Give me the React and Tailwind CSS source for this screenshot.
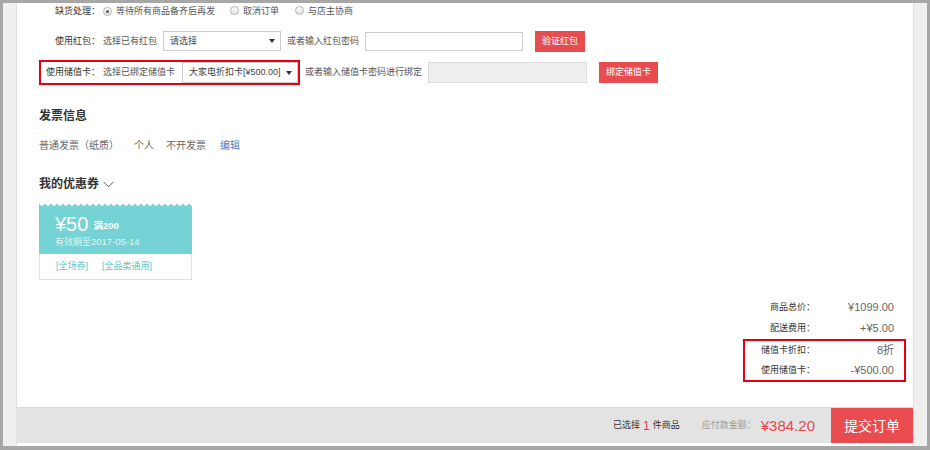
import React from "react";

const font = { fontFamily: '"Liberation Sans", "Noto Sans CJK SC", sans-serif' };

function Radio({ checked }) {
  return (
    <span className="relative inline-flex h-[9px] w-[9px] shrink-0 items-center justify-center rounded-full border border-[#b3b3b3] bg-gradient-to-b from-[#ffffff] to-[#e3e3e3]">
      {checked && <span className="h-[3px] w-[3px] rounded-full bg-[#555555]" />}
    </span>
  );
}

function Arrow() {
  return (
    <svg width="6" height="4" viewBox="0 0 6 4" className="shrink-0">
      <path d="M0 0 L6 0 L3 4 Z" fill="#333333" />
    </svg>
  );
}

export default function App() {
  return (
    <div
      className="h-[450px] w-[930px] overflow-hidden bg-[#a7a7a7] pb-[4px] pl-[3px] pr-[3px] pt-[3px] text-[9px] leading-none text-[#555555]"
      style={font}
    >
      <div className="flex h-full bg-[#efefef]">
        <div className="w-[14px] shrink-0 border-r border-[#e0e0e0]" />
        <div className="flex min-w-0 flex-1 flex-col bg-white">
          <div className="flex flex-1 flex-col pl-[22px]">
            {/* row 1 */}
            <div className="flex h-[16px] items-center">
              <div className="w-[64px] pr-[3px] text-right text-[#333333]">缺货处理：</div>
              <Radio checked />
              <span className="ml-[4px]">等待所有商品备齐后再发</span>
              <span className="ml-[15px]"><Radio /></span>
              <span className="ml-[4px]">取消订单</span>
              <span className="ml-[16px]"><Radio /></span>
              <span className="ml-[4px]">与店主协商</span>
            </div>
            {/* row 2 */}
            <div className="mt-[11px] flex h-[22px] items-center">
              <div className="w-[64px] pr-[3px] text-right text-[#333333]">使用红包：</div>
              <span>选择已有红包</span>
              <div className="ml-[6px] flex h-[20px] w-[118px] items-center justify-between border border-[#cccccc] pl-[6px] pr-[5px] text-[#444444]">
                <span>请选择</span>
                <Arrow />
              </div>
              <span className="ml-[6px]">或者输入红包密码</span>
              <div className="ml-[6px] h-[19px] w-[158px] border border-[#cccccc] bg-white" />
              <div className="ml-[12px] flex h-[21px] w-[50px] items-center justify-center bg-[#e84c4f] text-white">验证红包</div>
            </div>
            {/* row 3 */}
            <div className="mt-[8px] flex h-[25px] items-center">
              <div className="flex h-[25px] w-[261px] items-center border-2 border-[#e60012]">
                <div className="w-[62px] pr-[3px] text-right text-[#333333]">使用储值卡：</div>
                <span>选择已绑定储值卡</span>
                <div className="ml-[7px] flex h-[21px] flex-1 items-center justify-between border border-[#cccccc] pl-[6px] pr-[5px] text-[#444444]">
                  <span>大家电折扣卡[¥500.00]</span>
                  <Arrow />
                </div>
              </div>
              <span className="ml-[5px]">或者输入储值卡密码进行绑定</span>
              <div className="ml-[6px] h-[21px] w-[159px] border border-[#dddddd] bg-[#efefef]" />
              <div className="ml-[12px] flex h-[21px] w-[59px] items-center justify-center bg-[#e84c4f] text-white">绑定储值卡</div>
            </div>
            {/* invoice */}
            <div className="mt-[21px] flex h-[20px] items-center text-[12px] font-bold text-[#333333]">发票信息</div>
            <div className="mt-[10px] flex h-[20px] items-center text-[10px] text-[#666666]">
              <span>普通发票（纸质）</span>
              <span className="ml-[15px]">个人</span>
              <span className="ml-[12px]">不开发票</span>
              <span className="ml-[14px] text-[#4a7cc2]">编辑</span>
            </div>
            <div className="mt-[18px] flex h-[20px] items-center text-[12px] font-bold text-[#333333]">
              <span>我的优惠券</span>
              <svg width="11" height="7" viewBox="0 0 11 7" className="ml-[4px]">
                <path d="M0.5 0.8 L5.5 5.8 L10.5 0.8" fill="none" stroke="#555555" strokeWidth="1" />
              </svg>
            </div>
            {/* coupon */}
            <div className="mt-[9px] w-[153px]">
              <div className="relative h-[51px] bg-[#75d2d5] pl-[16px] pt-[9px] text-white">
                <div className="absolute left-0 right-0 top-0 h-[3px] bg-[radial-gradient(circle_at_3px_0px,#ffffff_2.4px,#75d2d5_3px)] bg-[length:6px_3px] bg-repeat-x" />
                <div className="flex h-[24px] items-center">
                  <span className="text-[20px]">¥50</span>
                  <span className="ml-[5px] mt-[3px] text-[9.5px] font-bold">满200</span>
                </div>
                <div className="flex h-[12px] items-center text-[#dff5f6]">
                  <span className="text-[9px]">有效期至</span>
                  <span className="text-[9.5px]">2017-05-14</span>
                </div>
              </div>
              <div className="flex h-[26px] items-center border border-t-0 border-[#c8ecee] pl-[16px] text-[#5cc4c9]">
                <span>[全场券]</span>
                <span className="ml-[14px]">[全品类通用]</span>
              </div>
            </div>
            {/* summary */}
            <div className="mr-[7px] mt-[17px] flex w-[163px] flex-col self-end">
              <div className="flex h-[21px] items-center justify-end pr-[12px]">
                <span className="text-[#333333]">商品总价：</span>
                <span className="w-[79px] text-right text-[11px] text-[#666666]">¥1099.00</span>
              </div>
              <div className="flex h-[21px] items-center justify-end pr-[12px]">
                <span className="text-[#333333]">配送费用：</span>
                <span className="w-[79px] text-right text-[11px] text-[#666666]">+¥5.00</span>
              </div>
              <div className="flex h-[43px] flex-col justify-center border-2 border-[#e60012] pr-[10px]">
                <div className="flex h-[20px] items-center justify-end">
                  <span className="text-[#333333]">储值卡折扣：</span>
                  <span className="w-[79px] text-right text-[11px] text-[#666666]">8折</span>
                </div>
                <div className="flex h-[20px] items-center justify-end">
                  <span className="text-[#333333]">使用储值卡：</span>
                  <span className="w-[79px] text-right text-[11px] text-[#666666]">-¥500.00</span>
                </div>
              </div>
            </div>
          </div>
          {/* footer */}
          <div className="flex h-[36px] shrink-0 items-center justify-end border-t border-[#dadada] bg-[#e3e3e3]">
            <span className="text-[#333333]">已选择</span>
            <span className="mx-[3px] text-[12px] text-[#e4393c]">1</span>
            <span className="text-[#333333]">件商品</span>
            <span className="ml-[22px] text-[#999999]">应付款金额：</span>
            <span className="ml-[5px] text-[15px] text-[#e8474a]">¥384.20</span>
            <div className="ml-[16px] flex h-full w-[82px] items-center justify-center bg-[#e84c4f] text-[14px] text-white">提交订单</div>
          </div>
          <div className="h-[3px] shrink-0 bg-white" />
        </div>
        <div className="w-[14px] shrink-0 border-l border-[#e0e0e0]" />
      </div>
    </div>
  );
}
